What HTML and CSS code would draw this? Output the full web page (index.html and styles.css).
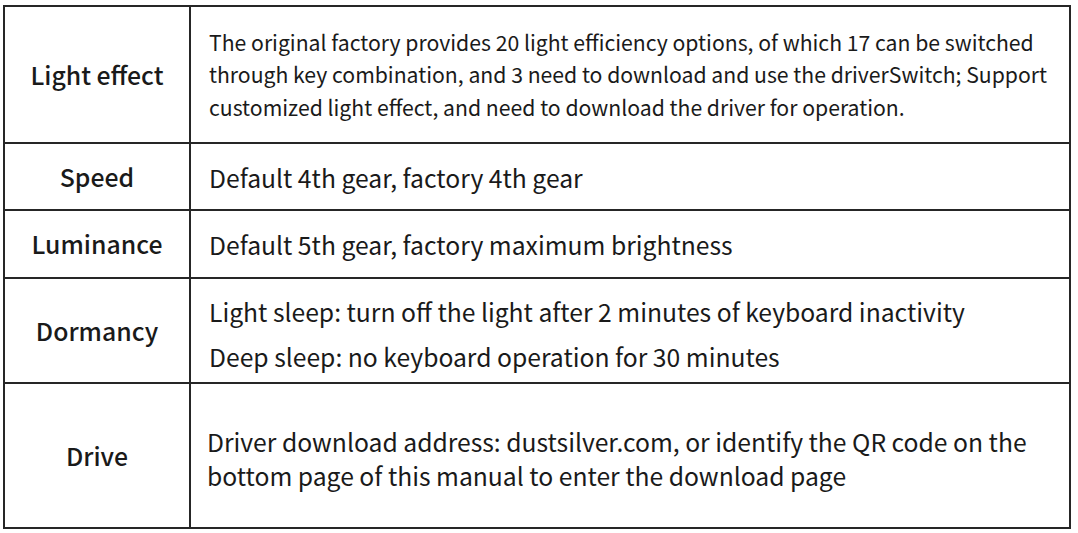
FILE: index.html
```html
<!DOCTYPE html>
<html>
<head>
<meta charset="utf-8">
<link rel="stylesheet" href="styles.css">
</head>
<body>
<div class="spec">
  <div class="label">Light effect</div>
  <div class="value small">The original factory provides 20 light efficiency options, of which 17 can be switched through key combination, and 3 need to download and use the driverSwitch; Support customized light effect, and need to download the driver for operation.</div>
  <div class="label">Speed</div>
  <div class="value">Default 4th gear, factory 4th gear</div>
  <div class="label">Luminance</div>
  <div class="value">Default 5th gear, factory maximum brightness</div>
  <div class="label">Dormancy</div>
  <div class="value dorm"><p>Light sleep: turn off the light after 2 minutes of keyboard inactivity</p><p>Deep sleep: no keyboard operation for 30 minutes</p></div>
  <div class="label">Drive</div>
  <div class="value drive">Driver download address: dustsilver.com, or identify the QR code on the bottom page of this manual to enter the download page</div>
</div>
</body>
</html>
```

FILE: styles.css
```css
html, body {
  margin: 0;
  padding: 0;
  background: #fff;
}
body {
  padding: 5px 0 0 3px;
  font-family: "Noto Sans CJK SC", "Noto Sans", sans-serif;
  color: #1a1a1a;
}
.spec {
  display: grid;
  grid-template-columns: 184px 878px;
  grid-template-rows: 135px 65px 66px 103px 143px;
  gap: 2px;
  padding: 2px;
  width: max-content;
  background: #262626;
}
.label, .value {
  background: #fff;
  display: flex;
  align-items: center;
}
.label {
  justify-content: center;
  font-size: 24.8px;
  font-weight: 500;
  padding-bottom: 2px;
}
.value {
  padding-left: 18px;
  padding-right: 10px;
  font-size: 24.7px;
  line-height: 34px;
}
.value.small {
  font-size: 21.2px;
  line-height: 32.5px;
}
.value.dorm {
  flex-direction: column;
  align-items: flex-start;
  justify-content: center;
  padding-top: 6px;
}
.value.dorm p {
  margin: 0;
  line-height: 45px;
}
.value.drive {
  padding-left: 16px;
  padding-top: 4px;
}
```
